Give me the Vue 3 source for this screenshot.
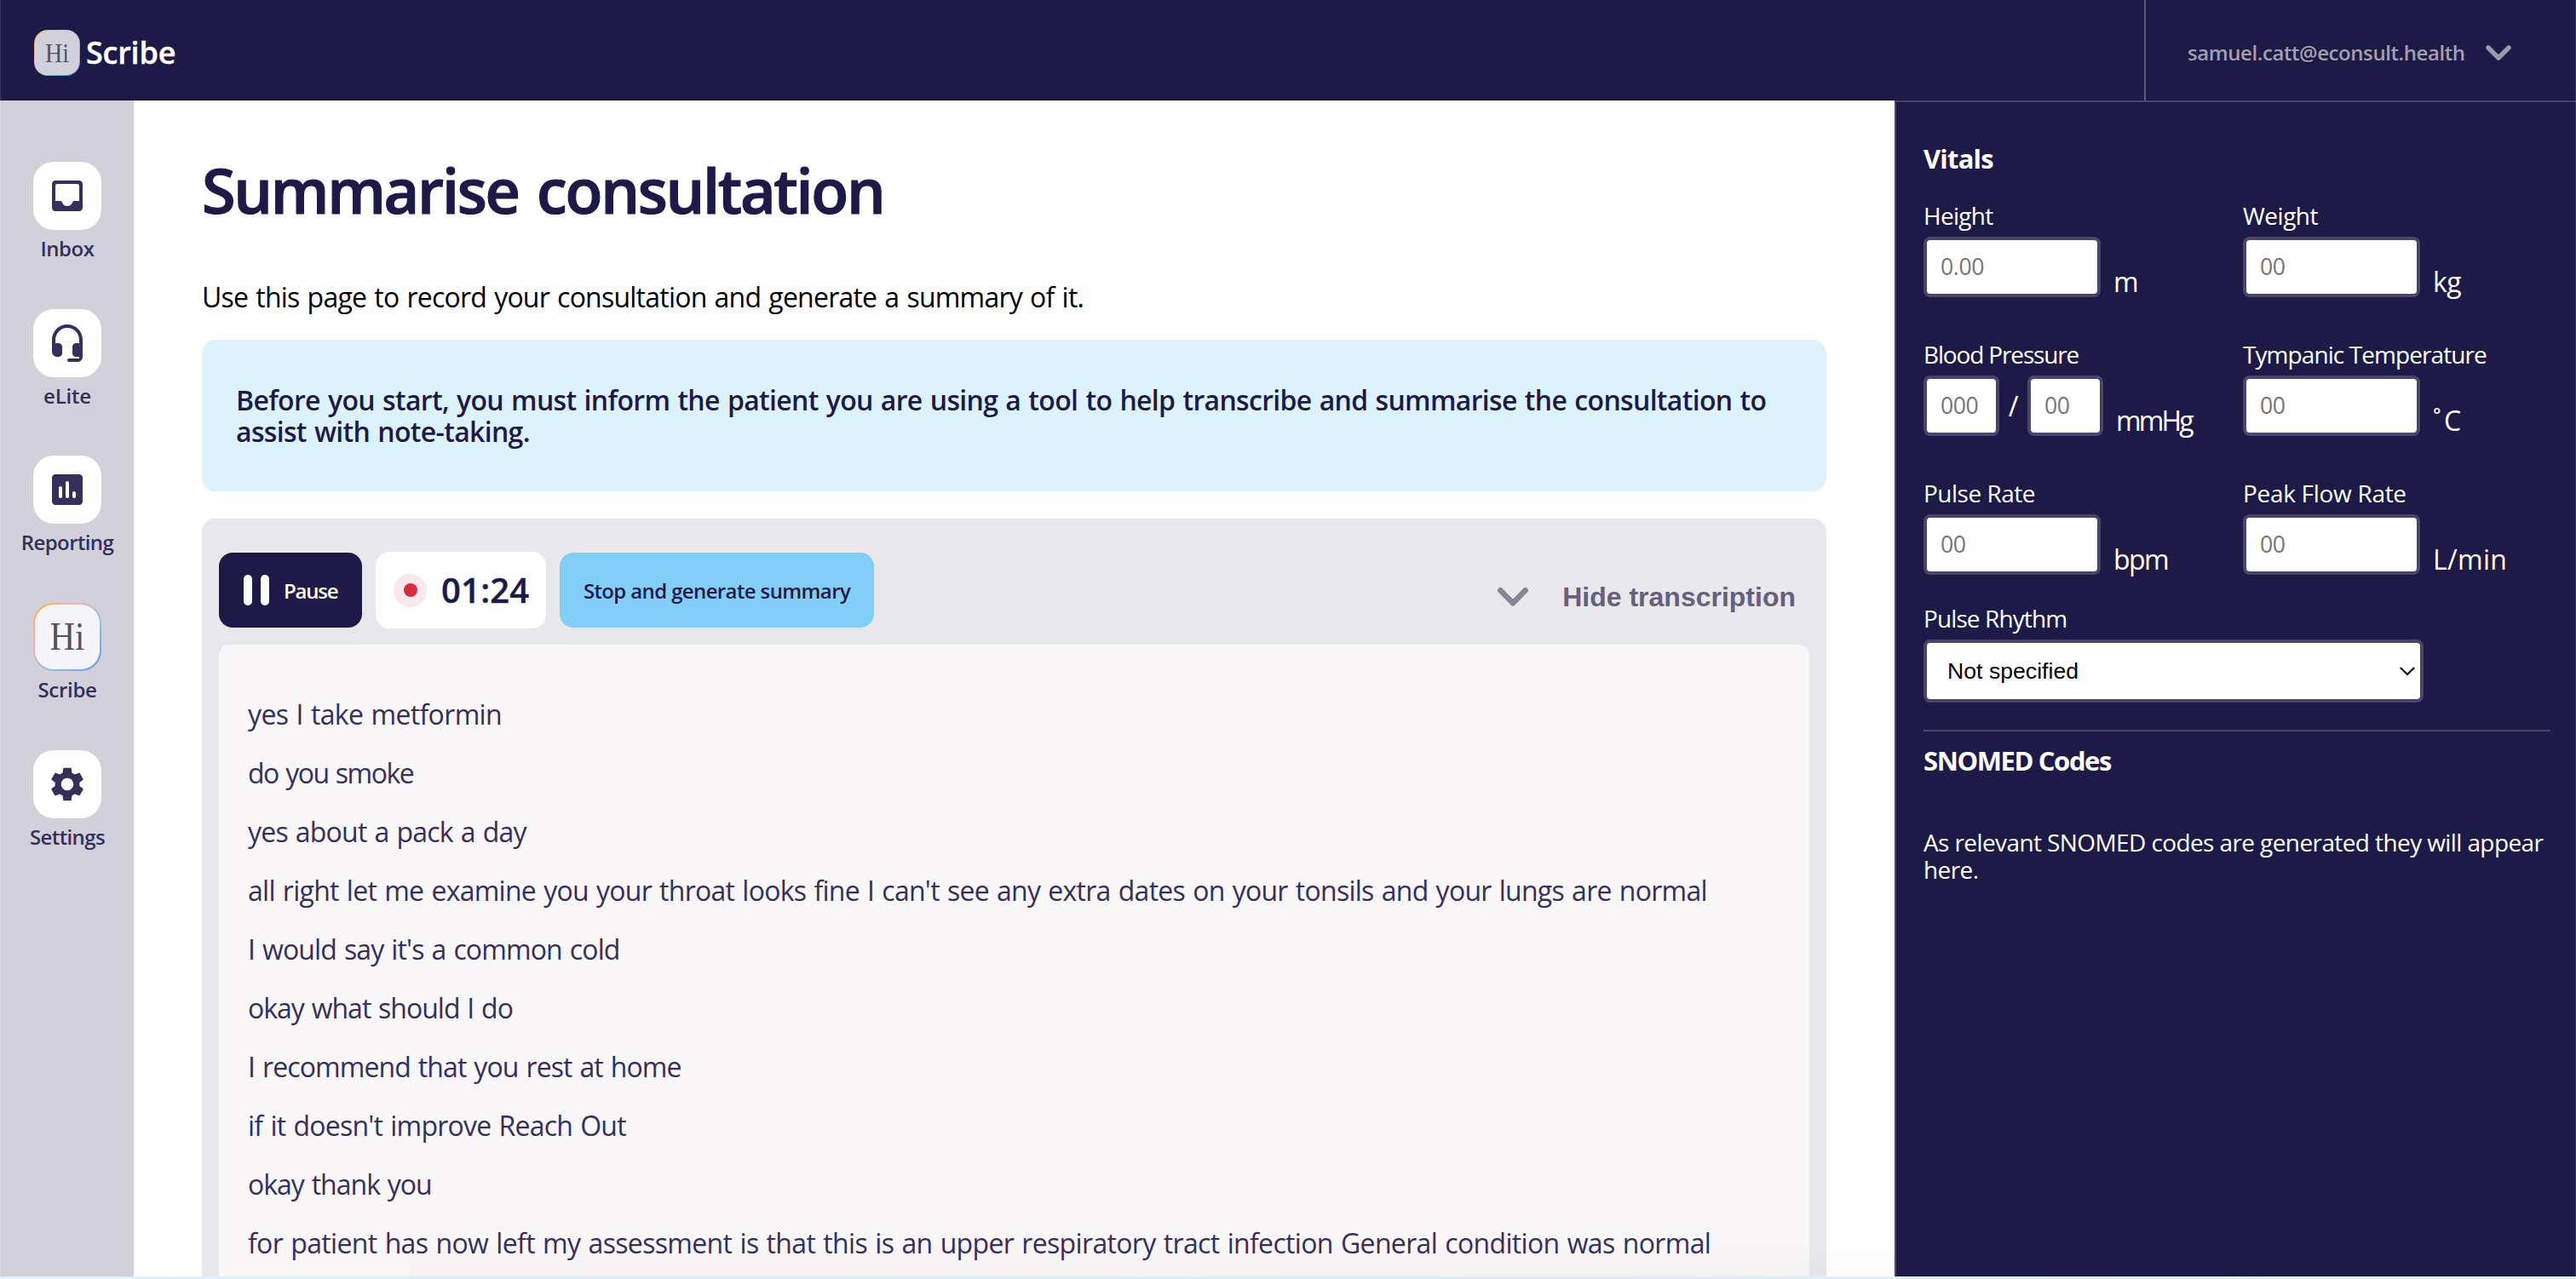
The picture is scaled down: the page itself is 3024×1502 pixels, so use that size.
<script setup>
const nav = [
  { id: 'inbox', label: 'Inbox', ls: -0.5 },
  { id: 'elite', label: 'eLite', ls: -0.2 },
  { id: 'reporting', label: 'Reporting', ls: -0.6 },
  { id: 'scribe', label: 'Scribe', ls: -0.3 },
  { id: 'settings', label: 'Settings', ls: -0.6 },
]
const icons = {
  inbox: 'M19 3H5c-1.1 0-2 .9-2 2v14c0 1.1.9 2 2 2h14c1.1 0 2-.9 2-2V5c0-1.1-.9-2-2-2zm0 12h-3c-.4 0-.75.3-.9.7C14.7 17 13.500 18 12 18s-2.700-1-3.100-2.300C8.750 15.300 8.400 15 8 15H5V6c0-.55.45-1 1-1h12c.55 0 1 .45 1 1v9z',
  elite: 'M12 1c-4.970 0-9 4.030-9 9v7c0 1.660 1.340 3 3 3h1c1.100 0 2-.9 2-2v-4c0-1.100-.9-2-2-2H5v-1.700C5 6.400 8 3.100 11.800 3c3.900-.1 7.200 3 7.200 7v2h-2c-1.100 0-2 .9-2 2v4c0 1.100.9 2 2 2h2v1h-6c-.55 0-1 .45-1 1s.45 1 1 1h5c1.660 0 3-1.340 3-3V10c0-4.970-4.030-9-9-9z',
  reporting: 'M19 3H5c-1.100 0-2 .9-2 2v14c0 1.100.9 2 2 2h14c1.100 0 2-.9 2-2V5c0-1.100-.9-2-2-2zM8 17c-.55 0-1-.45-1-1v-5c0-.55.45-1 1-1s1 .45 1 1v5c0 .55-.45 1-1 1zm4 0c-.55 0-1-.45-1-1V8c0-.55.45-1 1-1s1 .45 1 1v8c0 .55-.45 1-1 1zm4 0c-.55 0-1-.45-1-1v-2c0-.55.45-1 1-1s1 .45 1 1v2c0 .55-.45 1-1 1z',
  settings: 'M19.140 12.940c.04-.3.06-.61.06-.94 0-.32-.02-.64-.07-.94l2.030-1.580c.18-.14.23-.41.12-.61l-1.920-3.320c-.12-.22-.37-.29-.59-.22l-2.390.96c-.5-.38-1.030-.7-1.620-.94l-.36-2.540c-.04-.24-.24-.41-.48-.41h-3.840c-.24 0-.43.17-.47.41l-.36 2.540c-.59.24-1.130.57-1.620.94l-2.390-.96c-.22-.08-.47 0-.59.22L2.740 8.870c-.12.21-.08.47.12.61l2.030 1.580c-.05.3-.09.63-.09.94s.02.64.07.94l-2.030 1.580c-.18.14-.23.41-.12.61l1.920 3.320c.12.22.37.29.59.22l2.390-.96c.5.38 1.030.7 1.620.94l.36 2.540c.05.24.24.41.48.41h3.840c.24 0 .44-.17.47-.41l.36-2.540c.59-.24 1.130-.56 1.620-.94l2.390.96c.22.08.47 0 .59-.22l1.920-3.320c.12-.22.07-.47-.12-.61l-2.010-1.580zM12 15.600c-1.980 0-3.600-1.620-3.600-3.600s1.620-3.600 3.600-3.600 3.600 1.620 3.600 3.600-1.620 3.600-3.600 3.600z',
}
const lines = [
  { text: 'yes I take metformin', ls: -0.65 },
  { text: 'do you smoke', ls: -1.5 },
  { text: 'yes about a pack a day', ls: -0.8 },
  { text: "all right let me examine you your throat looks fine I can't see any extra dates on your tonsils and your lungs are normal", ls: -0.73 },
  { text: "I would say it's a common cold", ls: -0.87 },
  { text: 'okay what should I do', ls: -1 },
  { text: 'I recommend that you rest at home', ls: -0.9 },
  { text: "if it doesn't improve Reach Out", ls: -0.76 },
  { text: 'okay thank you', ls: -1 },
  { text: 'for patient has now left my assessment is that this is an upper respiratory tract infection General condition was normal', ls: -0.66 },
]
const vitals = [
  { label: 'Height', ls: -0.7, inputs: ['0.00'], unit: 'm', uls: 0 },
  { label: 'Weight', ls: -0.5, inputs: ['00'], unit: 'kg', uls: -0.5 },
  { label: 'Blood Pressure', ls: -1.15, inputs: ['000', '00'], unit: 'mmHg', uls: -2.9 },
  { label: 'Tympanic Temperature', ls: -0.92, inputs: ['00'], unit: '˚C', uls: 3.5 },
  { label: 'Pulse Rate', ls: -0.5, inputs: ['00'], unit: 'bpm', uls: -1.6 },
  { label: 'Peak Flow Rate', ls: -0.3, inputs: ['00'], unit: 'L/min', uls: 0.3 },
]
</script>

<template>
  <div class="app">
    <header class="header">
      <div class="brand">
        <span class="logo"><span class="logo-in">
          <svg width="52" height="52" viewBox="0 0 52 52"><text x="12" y="36.500" font-size="31" textLength="28" lengthAdjust="spacingAndGlyphs" class="hi">Hi</text></svg>
        </span></span>
        <span class="brand-name">Scribe</span>
      </div>
      <div class="user">
        <span class="email">samuel.catt@econsult.health</span>
        <svg class="user-chev" width="32" height="20" viewBox="0 0 32 20"><path d="M4 4l12 12L28 4" fill="none" stroke="#9c99ab" stroke-width="5.500" stroke-linecap="round" stroke-linejoin="round" /></svg>
      </div>
    </header>

    <div class="body">
      <nav class="side">
        <a v-for="n in nav" :key="n.id" class="nav-item">
          <span v-if="n.id === 'scribe'" class="tile grad"><span class="tile-in">
            <svg width="76" height="76" viewBox="0 0 76 76"><text x="17.500" y="53" font-size="47" textLength="41" lengthAdjust="spacingAndGlyphs" class="hi">Hi</text></svg>
          </span></span>
          <span v-else class="tile"><svg width="48" height="48" viewBox="0 0 24 24"><path :d="icons[n.id]" fill="#35305b" /></svg></span>
          <span class="nav-label" :style="{ letterSpacing: n.ls + 'px' }">{{ n.label }}</span>
        </a>
      </nav>

      <main class="main">
        <h1>Summarise consultation</h1>
        <p class="lead">Use this page to record your consultation and generate a summary of it.</p>
        <div class="notice">Before you start, you must inform the patient you are using a tool to help transcribe and summarise the consultation to assist with note-taking.</div>
        <section class="card">
          <div class="toolbar">
            <button class="pause"><i></i><i></i><span>Pause</span></button>
            <div class="timer"><span class="rec"><b></b></span><span class="time">01:24</span></div>
            <button class="stop">Stop and generate summary</button>
            <button class="hide">
              <svg width="40" height="26" viewBox="0 0 40 26"><path d="M5.300 5.300L20 20.300l14.700-15" fill="none" stroke="#868594" stroke-width="6.600" stroke-linecap="round" stroke-linejoin="round" /></svg>
              <span>Hide transcription</span>
            </button>
          </div>
          <div class="transcript">
            <p v-for="l in lines" :key="l.text" :style="{ letterSpacing: l.ls + 'px' }">{{ l.text }}</p>
          </div>
        </section>
      </main>

      <aside class="panel">
        <h2 class="vt">Vitals</h2>
        <div class="grid">
          <div v-for="v in vitals" :key="v.label" class="field">
            <label :style="{ letterSpacing: v.ls + 'px' }">{{ v.label }}</label>
            <div class="row">
              <template v-for="(p, i) in v.inputs" :key="i">
                <span v-if="i" class="slash">/</span>
                <input :class="{ small: v.inputs.length > 1 }" :placeholder="p" />
              </template>
              <span class="unit" :style="{ letterSpacing: v.uls + 'px' }">{{ v.unit }}</span>
            </div>
          </div>
        </div>
        <label class="rhythm">Pulse Rhythm</label>
        <div class="select">
          <span>Not specified</span>
          <svg width="22" height="14" viewBox="0 0 22 14"><path d="M2.800 3l8.200 8 8.200-8" fill="none" stroke="#111" stroke-width="2.200" /></svg>
        </div>
        <div class="rule"></div>
        <h2 class="sn">SNOMED Codes</h2>
        <p class="hint">As relevant SNOMED codes are generated they will appear here.</p>
      </aside>
    </div>
    <div class="bottom"></div>
    <div class="fade"></div>
    <div class="edge"></div>
  </div>
</template>

<style>
body { margin: 0; overflow: hidden; }
</style>

<style scoped>
* { box-sizing: border-box; }
.app {
  position: relative;
  width: 3024px;
  height: 1502px;
  display: flex;
  flex-direction: column;
  overflow: hidden;
  background: #fff;
  font-family: 'Trebuchet MS', 'Open Sans', sans-serif;
  color: #1e1a48;
}
h1, h2, p { margin: 0; font-weight: 400; }
button { border: 0; padding: 0; margin: 0; font: inherit; color: inherit; background: none; }
svg { display: block; flex: none; }
.hi { font-family: 'Liberation Serif', serif; fill: #545358; }

.header { flex: none; height: 118px; display: flex; justify-content: space-between; background: #1e1a48; border-bottom: 1px solid #181240; }
.brand { display: flex; align-items: center; height: 124px; padding-left: 40px; }
.logo { width: 54px; height: 54px; padding: 1px; border-radius: 16px; background: linear-gradient(135deg, #fba74f 12%, #e9b5da 34%, #86c9d0 62%, #5f92f5 90%); }
.logo-in { display: block; width: 52px; height: 52px; border-radius: 15px; background: #d2d0db; }
.brand-name { margin-left: 7px; padding-bottom: 1px; color: #fff; font-size: 36px; font-weight: 600; letter-spacing: -.2px; -webkit-text-stroke: .4px currentColor; }
.user { display: flex; align-items: center; height: 118px; width: 507px; padding: 5px 75px 0 49px; border-left: 2px solid #5e5a7e; color: #a19fb0; }
.email { font-size: 24px; font-weight: 600; letter-spacing: -.42px; }
.user-chev { margin-left: auto; }

.body { flex: none; height: 1381px; display: flex; }
.side { flex: none; width: 157px; padding: 72px 0 0 1px; display: flex; flex-direction: column; align-items: center; gap: 56.670px; background: #d2d0db; }
.nav-item { display: flex; flex-direction: column; align-items: center; }
.tile { width: 80px; height: 80px; border-radius: 24px; background: #fff; display: flex; align-items: center; justify-content: center; }
.grad { background: linear-gradient(135deg, #fbb161 12%, #f3abd0 34%, #86c9d0 62%, #6f9df5 90%); }
.tile-in { width: 76px; height: 76px; border-radius: 22px; background: #f5f5f9; }
.nav-label { margin-top: 8px; height: 28px; line-height: 28px; font-size: 24px; font-weight: 600; color: #35305b; }

.main { flex: none; width: 2067px; height: 1381px; overflow: hidden; padding: 62px 80px 0; display: flex; flex-direction: column; }
h1 { height: 84px; font-size: 72px; line-height: 86px; font-weight: 600; letter-spacing: -2.280px; word-spacing: 5px; white-space: nowrap; -webkit-text-stroke: 1.200px currentColor; }
.lead { margin-top: 66px; font-size: 32px; line-height: 38px; letter-spacing: -.77px; word-spacing: 1.500px; color: #000; }
.notice { flex: none; margin-top: 31px; height: 178px; padding: 52px 30px 0 40px; border-radius: 16px; background: #dcf2fd; font-size: 32px; line-height: 37px; font-weight: 600; letter-spacing: -.68px; word-spacing: 1.500px; }
.card { flex: 1; margin-top: 32px; padding: 39px 20px 0; border-radius: 16px 16px 0 0; background: #e8e7ec; display: flex; flex-direction: column; }
.toolbar { display: flex; align-items: center; gap: 16px; height: 90px; }
.pause, .stop { height: 88px; border-radius: 16px; font-size: 24px; font-weight: 600; }
.pause { width: 168px; padding-left: 29px; display: flex; align-items: center; background: #1e1a48; color: #fff; letter-spacing: -1.200px; }
.pause i { width: 10px; height: 36px; border-radius: 5px; background: #fff; margin-right: 10px; }
.pause span { margin-left: 7px; }
.timer { width: 200px; height: 90px; padding-left: 21px; display: flex; align-items: center; border-radius: 16px; background: #fff; }
.rec { width: 39px; height: 39px; border-radius: 50%; background: #fae8ea; display: flex; align-items: center; justify-content: center; }
.rec b { width: 16px; height: 16px; border-radius: 50%; background: #d92b3f; }
.time { margin-left: 17px; padding-bottom: 1px; font-size: 40px; font-weight: 600; letter-spacing: .2px; -webkit-text-stroke: .4px currentColor; }
.stop { width: 369px; background: #81cff7; letter-spacing: -.62px; }
.hide { margin: 16px 16px 0 auto; display: flex; align-items: center; gap: 38px; color: #656080; font: bold 32px/38px 'Liberation Sans', Arial, sans-serif; }
.transcript { flex: 1; margin-top: 19px; padding: 47px 34px 0; border-radius: 12px 12px 0 0; background: #f8f6f7; }
.transcript p { font-size: 32px; line-height: 69px; word-spacing: 1.500px; color: #35305b; white-space: nowrap; }

.panel { flex: none; width: 800px; height: 1381px; padding: 47px 30px 0 32px; border-top: 2px solid #4a466b; border-left: 2px solid #4a466b; background: #1e1a48; color: #fff; display: flex; flex-direction: column; }
h2 { font-size: 31px; line-height: 38px; font-weight: 700; }
.vt { letter-spacing: -.8px; }
.grid { margin-top: 32px; display: grid; grid-template-columns: 375px 1fr; grid-auto-rows: 112px; row-gap: 51px; }
label { display: block; font-size: 28px; line-height: 32px; white-space: nowrap; }
.row { display: flex; align-items: flex-end; margin-top: 9px; height: 71px; }
input { width: 208px; height: 71px; padding: 0 0 3px 16px; border: 4px solid #4a466b; border-radius: 8px; background: #fff; font: 26.670px 'Trebuchet MS', 'Open Sans', sans-serif; letter-spacing: -.4px; }
input.small { width: 89px; padding-right: 0; letter-spacing: -.5px; }
input::placeholder { color: #757575; opacity: 1; }
.slash { width: 33px; line-height: 71px; text-align: center; font-size: 32px; }
.unit { margin: 0 0 -1px 15px; font-size: 32px; line-height: 38px; }
.rhythm { margin-top: 35px; letter-spacing: -.9px; }
.select { margin-top: 9px; width: 587px; height: 74px; padding: 0 4px 0 24px; display: flex; align-items: center; justify-content: space-between; border: 4px solid #4a466b; border-radius: 8px; background: #fff; color: #000; font: 26.670px 'Liberation Sans', Arial, sans-serif; }
.rule { flex: none; margin-top: 32px; height: 2px; background: #4a466b; }
.sn { margin-top: 15px; letter-spacing: -1.400px; }
.hint { margin-top: 61px; font-size: 28px; line-height: 32px; letter-spacing: -.6px; }

.bottom { flex: none; height: 3px; background: linear-gradient(90deg, #def2fc, #dcedf8 60%, #e6f0fc); }
.fade { position: absolute; left: 480px; right: 0; bottom: 3px; height: 44px; background: linear-gradient(transparent, rgba(0, 0, 0, .018)); pointer-events: none; }
.edge { position: absolute; inset: 0; border: solid rgba(255, 255, 255, .12); border-width: 0 1px; pointer-events: none; }
</style>
